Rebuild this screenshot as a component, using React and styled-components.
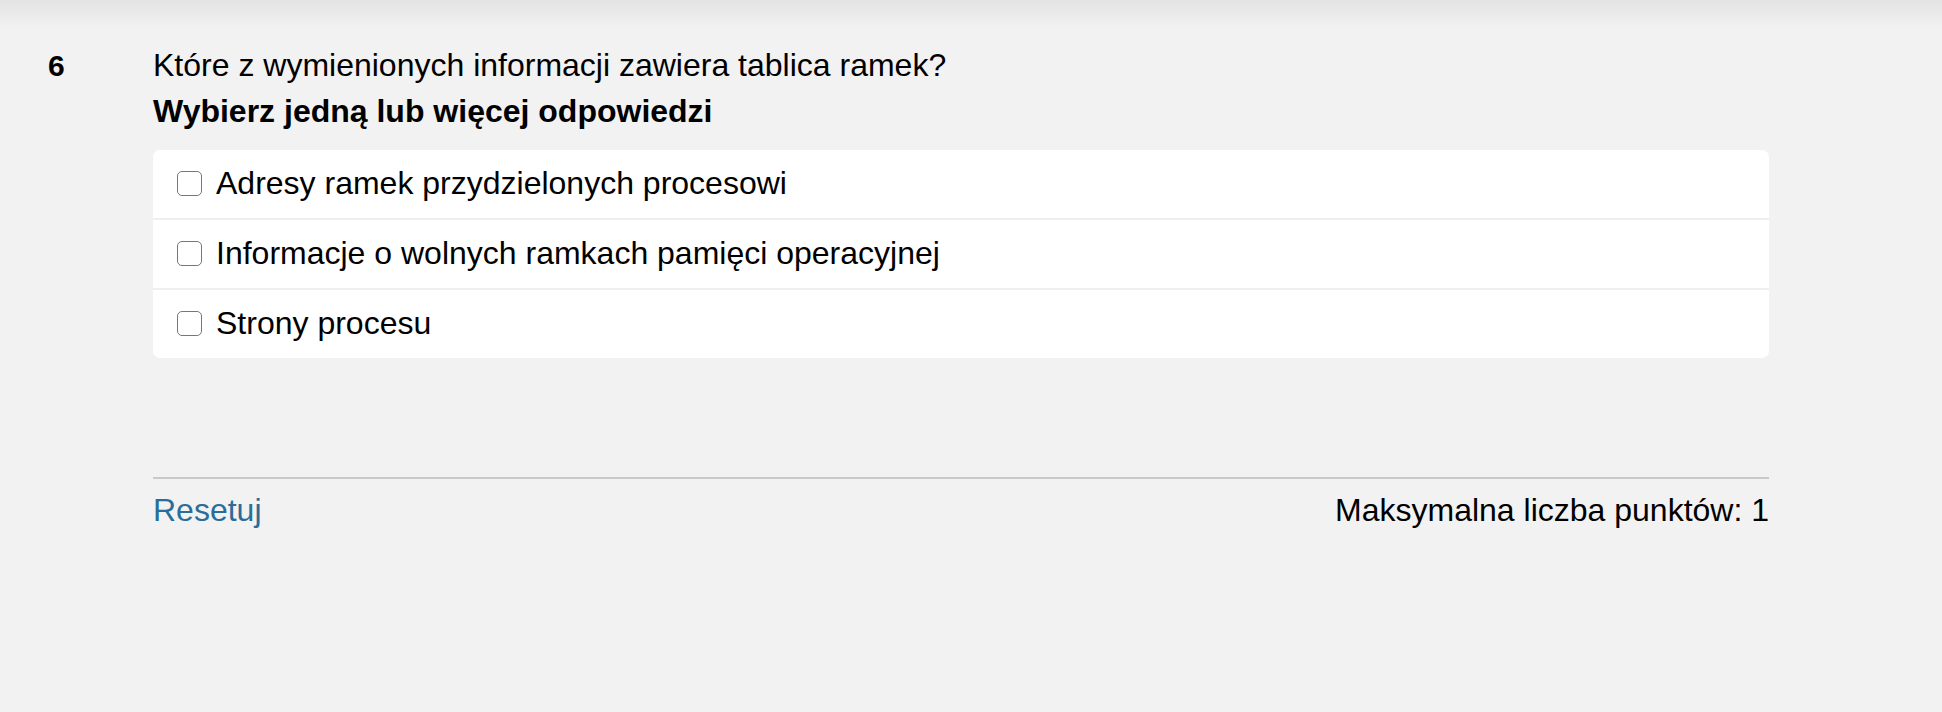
import React from "react";
import styled, { createGlobalStyle } from "styled-components";

const GlobalStyle = createGlobalStyle`
  html, body {
    margin: 0;
    padding: 0;
  }
  body {
    background: linear-gradient(to bottom, #e3e3e3 0px, #f2f2f2 30px) #f2f2f2;
    background-repeat: no-repeat;
    font-family: "Liberation Sans", Arial, sans-serif;
    color: #000;
    min-height: 712px;
  }
`;

const Page = styled.div`
  display: grid;
  grid-template-columns: 105px 1616px;
  align-items: baseline;
  padding: 42px 0 0 48px;
`;

const Number = styled.div`
  font-size: 30px;
  font-weight: bold;
  line-height: 46px;
`;

const Content = styled.div`
  display: flex;
  flex-direction: column;
`;

const Prompt = styled.div`
  font-size: 32px;
  line-height: 46px;
  font-weight: ${(p) => (p.$bold ? "bold" : "normal")};
`;

const Answers = styled.div`
  margin-top: 16px;
  background: #fff;
  border-radius: 7px;
  display: flex;
  flex-direction: column;
`;

const Row = styled.label`
  display: flex;
  align-items: center;
  gap: 14px;
  height: 66px;
  padding: 0 24px 2px;
  font-size: 32px;
  border-top: ${(p) => (p.$first ? "none" : "2px solid #efefef")};
`;

const Box = styled.input`
  appearance: none;
  margin: 0;
  width: 25px;
  height: 25px;
  border: 1.5px solid #777;
  border-radius: 5px;
  background: #fff;
  box-sizing: border-box;
  flex: none;
`;

const Footer = styled.div`
  margin-top: 119px;
  border-top: 2px solid #c9c9c9;
  padding-top: 8px;
  display: flex;
  justify-content: space-between;
  font-size: 32px;
  line-height: 46px;
`;

const Reset = styled.a`
  color: #2b6d98;
  text-decoration: none;
  cursor: pointer;
`;

const answers = [
  "Adresy ramek przydzielonych procesowi",
  "Informacje o wolnych ramkach pamięci operacyjnej",
  "Strony procesu",
];

export default function App() {
  return (
    <>
      <GlobalStyle />
      <Page>
        <Number>6</Number>
        <Content>
          <Prompt>Które z wymienionych informacji zawiera tablica ramek?</Prompt>
          <Prompt $bold>Wybierz jedną lub więcej odpowiedzi</Prompt>
          <Answers>
            {answers.map((a, i) => (
              <Row key={a} $first={i === 0}>
                <Box type="checkbox" />
                <span>{a}</span>
              </Row>
            ))}
          </Answers>
          <Footer>
            <Reset>Resetuj</Reset>
            <span>Maksymalna liczba punktów: 1</span>
          </Footer>
        </Content>
      </Page>
    </>
  );
}
